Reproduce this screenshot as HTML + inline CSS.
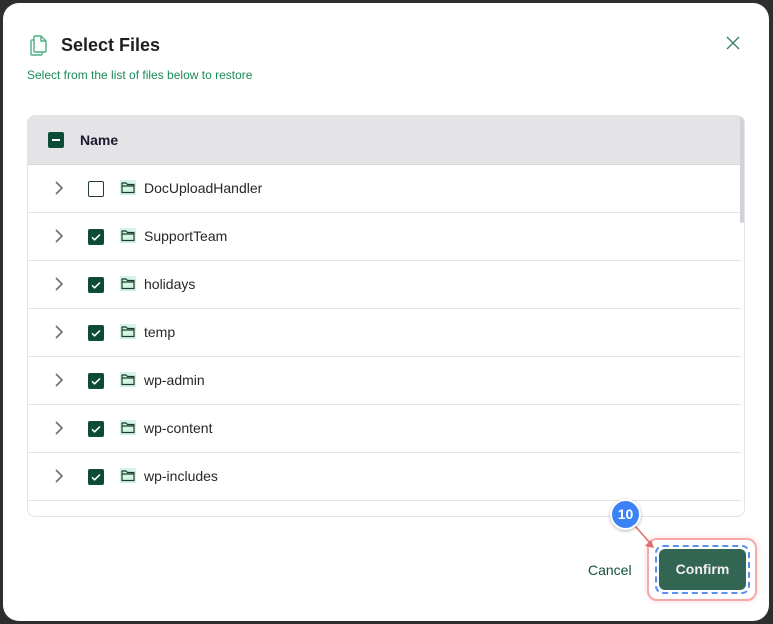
<!DOCTYPE html>
<html><head><style>
*{box-sizing:border-box;margin:0;padding:0}
body{width:773px;height:624px;background:#2e2e2e;font-family:"Liberation Sans",sans-serif;position:relative;overflow:hidden}
.dlg{position:absolute;left:3px;top:3px;width:766px;height:618px;background:#fff;border-radius:16px}
.title{position:absolute;left:58px;top:32px;font-size:18px;font-weight:bold;color:#1f1f1f}
.sub{position:absolute;left:24px;top:65px;font-size:12px;color:#1a8a5c}
.tbl{position:absolute;left:27px;top:115px;width:718px;height:402px;border:1px solid #e4e4e7;border-radius:8px;overflow:hidden}
.hd{height:49px;background:#e4e4e7;position:relative;border-bottom:1px solid #d8d8dc}
.hd span{position:absolute;left:52px;top:16px;font-size:14px;font-weight:bold;color:#1a1a2e}
.row{height:48px;border-bottom:1px solid #e4e4e7;position:relative;width:713px}
.row .t{position:absolute;left:116px;top:15px;font-size:14px;color:#27272a}
.cb{position:absolute;left:60px;top:16px;width:16px;height:16px;border-radius:2px;background:#0e4b36}
.cb.off{background:#fff;border:1.5px solid #1f3d33}
.chev{position:absolute;left:26px;top:16px}
.fold{position:absolute;left:92px;top:15px;width:16px;height:15px;background:#d3f5e3}
.sb{position:absolute;right:0;top:0;width:4px;height:107px;background:#cfd2da;border-radius:2px}
</style></head><body>
<div class="dlg">
<svg style="position:absolute;left:26px;top:30px" width="20" height="24" viewBox="0 0 20 24" fill="none" stroke="#4caf84" stroke-width="1.4"><path d="M6 3h6l5 5v10a1 1 0 0 1-1 1H6a1 1 0 0 1-1-1V4a1 1 0 0 1 1-1z"/><path d="M12 3v5h5"/><path d="M5 7H3a1 1 0 0 0-1 1v13a1 1 0 0 0 1 1h9a1 1 0 0 0 1-1v-2"/></svg>
<div class="title">Select Files</div>
<svg style="position:absolute;left:723px;top:33px" width="14" height="14" viewBox="0 0 14 14" stroke="#3d7a66" stroke-width="1.3"><path d="M1 1l12 12M13 1L1 13"/></svg>
<div class="sub">Select from the list of files below to restore</div>
</div>
<div class="tbl">
<div class="hd"><div class="cb" style="left:20px;top:16px"><div style="position:absolute;left:4px;top:7px;width:8px;height:2px;background:#fff"></div></div><span>Name</span></div>
<div class="sb"></div>
<div id="rows"></div>
</div>
<div style="position:absolute;left:588px;top:562px;font-size:14px;color:#12503a">Cancel</div>
<div style="position:absolute;left:647px;top:538px;width:110px;height:63px;border:2px solid #f8a8a8;border-radius:10px;box-shadow:0 0 6px rgba(248,150,150,.4)"></div>
<div style="position:absolute;left:655px;top:545px;width:95px;height:49px;border:2px dashed #5b8ff0;border-radius:8px"></div>
<div style="position:absolute;left:659px;top:549px;width:87px;height:41px;background:#336652;border-radius:6px;color:#f0f0f0;font-size:14px;font-weight:bold;text-align:center;line-height:41px">Confirm</div>
<svg style="position:absolute;left:630px;top:520px" width="30" height="34"><path d="M5 6L21 24" stroke="#e06a6a" stroke-width="1.5"/><path d="M24 28l-9-2 6-6z" fill="#e06a6a"/></svg>
<div style="position:absolute;left:610px;top:499px;width:31px;height:31px;border-radius:50%;background:#3b82f6;border:2px solid #fff;color:#fff;font-weight:bold;font-size:14px;text-align:center;line-height:27px;box-shadow:0 1px 3px rgba(0,0,0,.3)">10</div>
<script>
var n=["DocUploadHandler","SupportTeam","holidays","temp","wp-admin","wp-content","wp-includes"],h="";
n.forEach(function(t,i){h+='<div class="row"><svg class="chev" width="10" height="14" viewBox="0 0 10 14"><path d="M2 1l6 6-6 6" fill="none" stroke="#6b6b70" stroke-width="1.6"/></svg><div class="cb'+(i?'':' off')+'">'+(i?'<svg width="16" height="16"><path d="M4 8.3l2.6 2.5L12 5.5" fill="none" stroke="#fff" stroke-width="1.5"/></svg>':'')+'</div><svg class="fold" viewBox="0 0 16 15"><path d="M2 3h4l1.5 1.5H14v8H2z M2 6h12" fill="none" stroke="#1f3d33" stroke-width="1.2"/></svg><span class="t">'+t+'</span></div>'});
document.getElementById("rows").innerHTML=h;
</script>
</body></html>
